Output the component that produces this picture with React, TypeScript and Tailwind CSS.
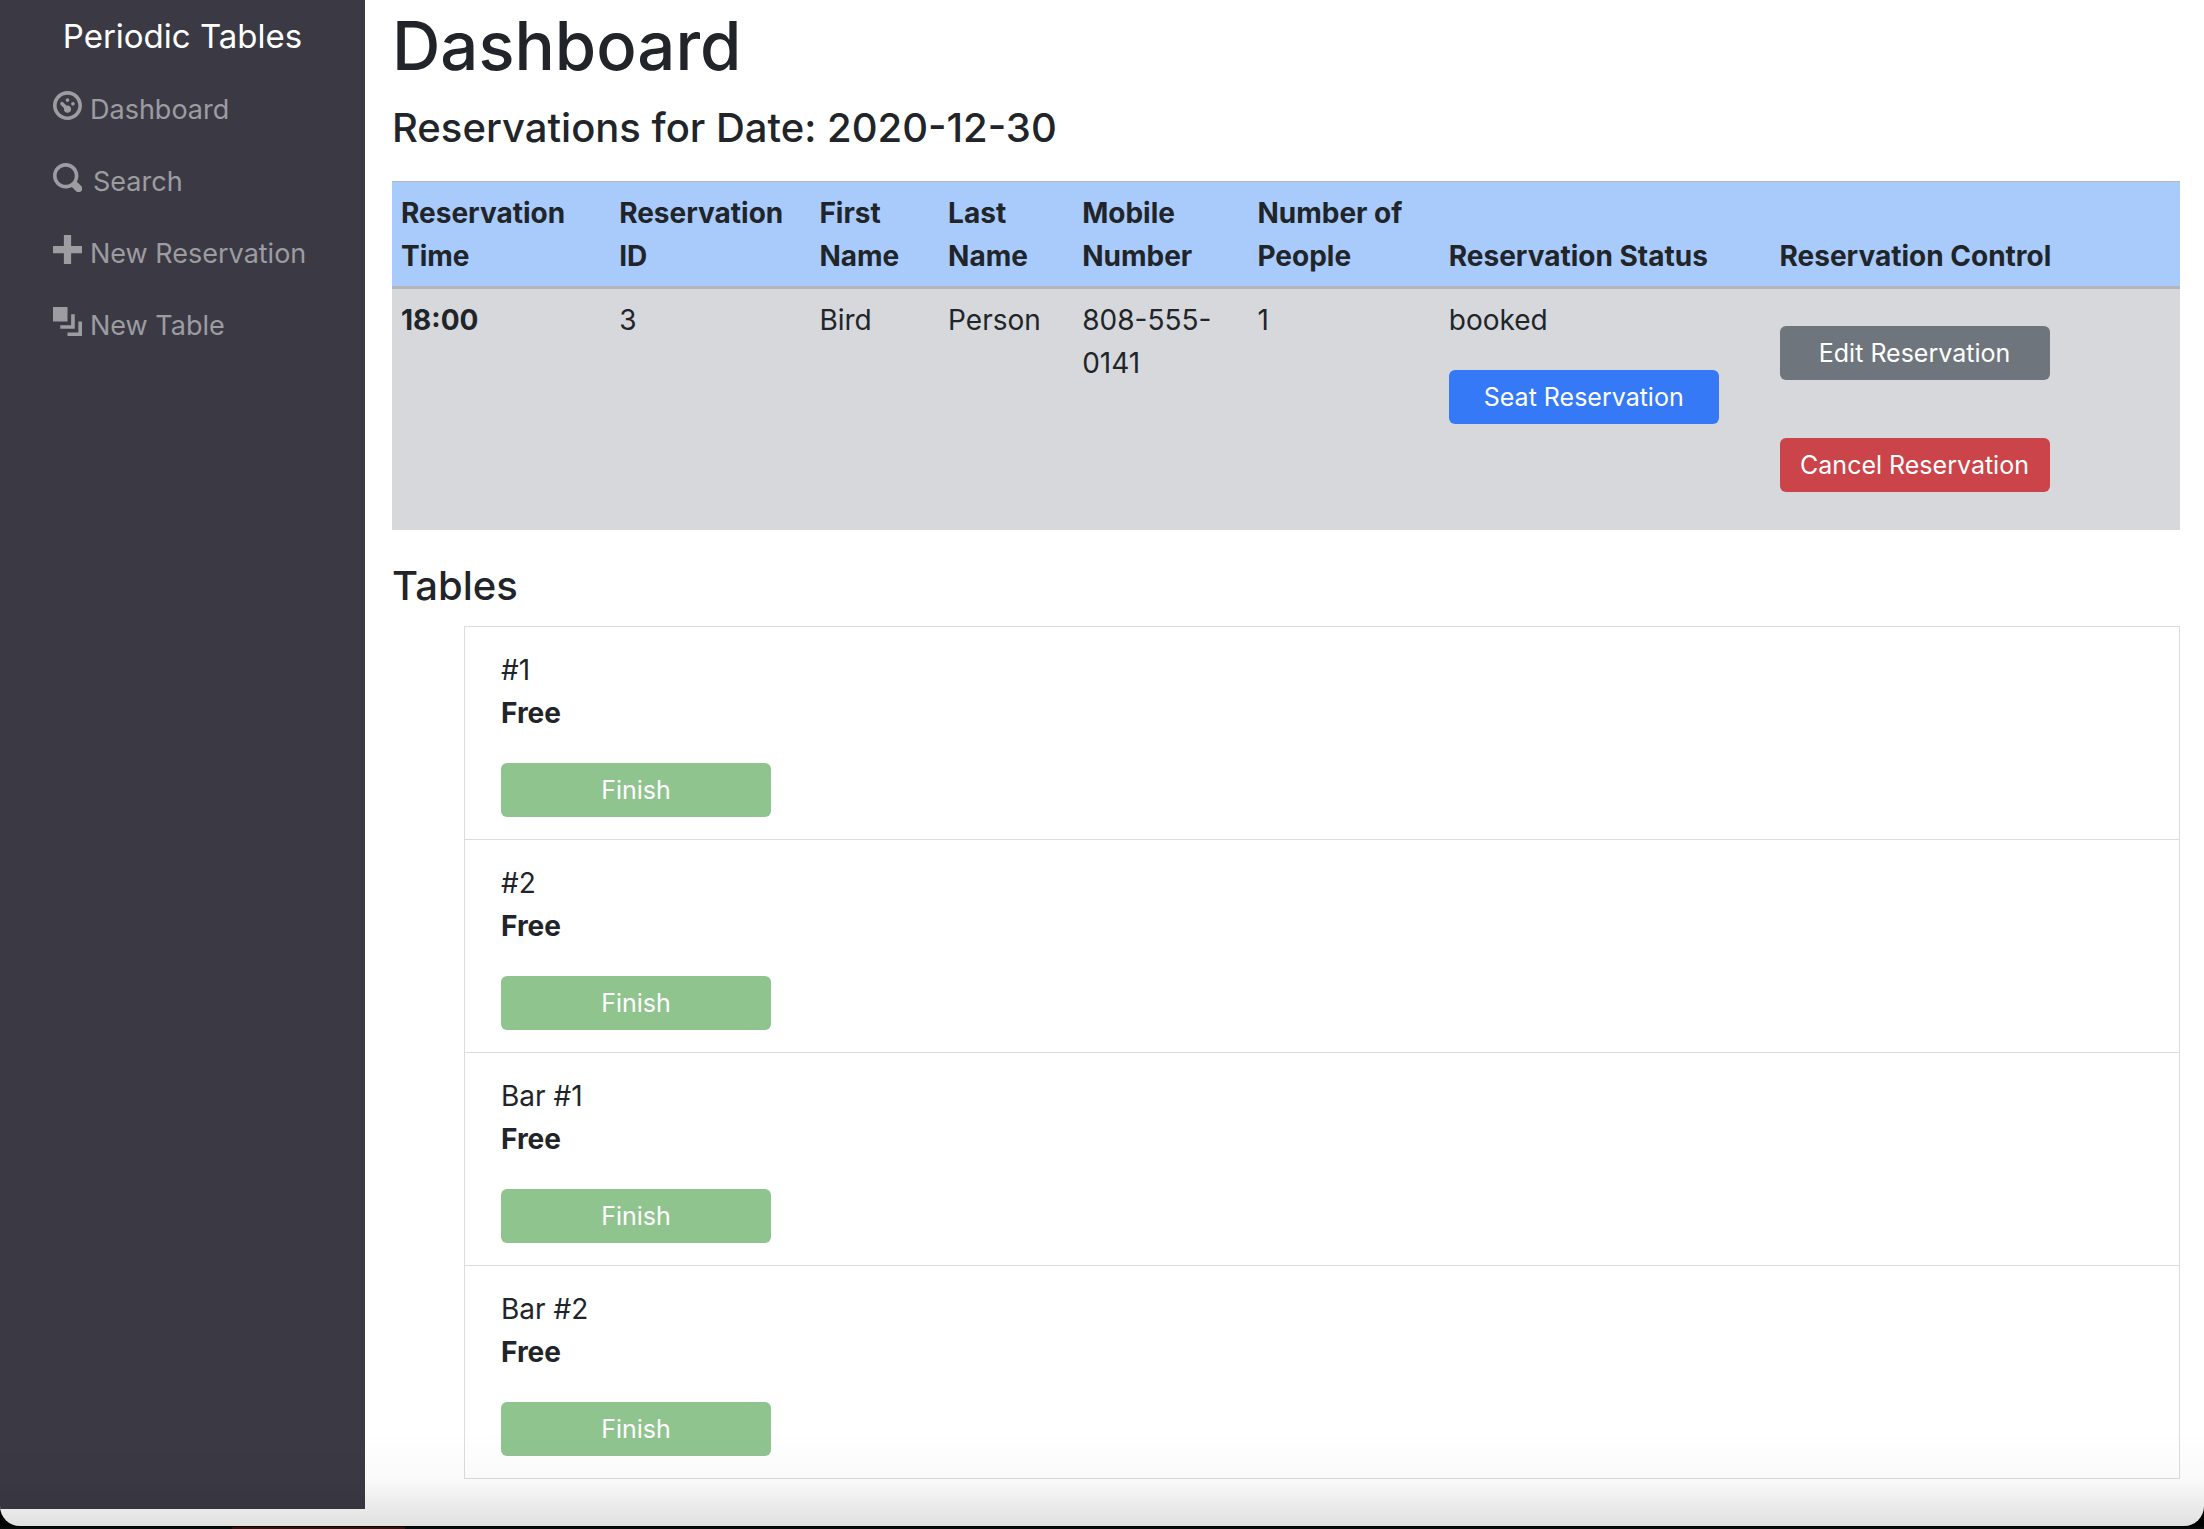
import type { ReactNode } from "react";

const icons = {
  dashboard:
    "M4 0c-2.2 0-4 1.800-4 4s1.800 4 4 4 4-1.800 4-4-1.800-4-4-4zm0 1c1.660 0 3 1.340 3 3s-1.340 3-3 3-3-1.340-3-3 1.340-3 3-3zm0 1c-.28 0-.5.22-.5.5s.22.5.5.5.5-.22.5-.5-.22-.5-.5-.5zm-1.660 1a.5.5 0 0 0-.19.84l.91.91c-.02.08-.06.16-.06.25 0 .55.45 1 1 1s1-.45 1-1-.45-1-1-1c-.09 0-.17.04-.25.06l-.91-.91a.5.5 0 0 0-.44-.16.5.5 0 0 0-.06 0zm3.160 0c-.28 0-.5.22-.5.5s.22.5.5.5.5-.22.5-.5-.22-.5-.5-.5z",
  search:
    "M3.500 0c-1.930 0-3.500 1.570-3.500 3.500s1.570 3.500 3.500 3.500c.59 0 1.170-.14 1.660-.41a1 1 0 0 0 .13.13l1 1a1.020 1.020 0 1 0 1.440-1.440l-1-1a1 1 0 0 0-.16-.13c.27-.49.44-1.060.44-1.660 0-1.930-1.550-3.500-3.500-3.500zm0 1c1.390 0 2.500 1.110 2.500 2.500 0 .66-.24 1.270-.66 1.720-.01.01-.02.02-.03.03a1 1 0 0 0-.13.13c-.44.4-1.040.63-1.690.63-1.390 0-2.500-1.110-2.500-2.500s1.110-2.500 2.500-2.500z",
  plus: "M3 0v3h-3v2h3v3h2v-3h3v-2h-3v-3h-2z",
  layers: "M0 0v4h4v-4h-4zm5 2v3h-3v1h4v-4h-1zm2 2v3h-3v1h4v-4h-1z",
};

function NavItem({ icon, wide, children }: { icon: keyof typeof icons; wide?: boolean; children: ReactNode }) {
  return (
    <li>
      <a href="#" className={`flex h-[43px] items-center text-[27px] text-[#9c9ca1] ${wide ? "gap-[11px]" : "gap-2"}`}>
        <svg viewBox="0 0 8 8" className="mb-2 h-[29px] w-[29px] shrink-0" fill="currentColor" aria-hidden="true">
          <path d={icons[icon]} />
        </svg>
        {children}
      </a>
    </li>
  );
}

function Button({ color, disabled, children }: { color: string; disabled?: boolean; children: ReactNode }) {
  return (
    <button
      type="button"
      disabled={disabled}
      className={`block h-[54px] w-[270px] rounded-md text-[25px] leading-[38px] text-white ${color}`}
    >
      {children}
    </button>
  );
}

const columns = [
  { label: "Reservation Time", width: "w-[12.2%]" },
  { label: "Reservation ID", width: "w-[11.2%]" },
  { label: "First Name", width: "w-[7.2%]" },
  { label: "Last Name", width: "w-[7.5%]" },
  { label: "Mobile Number", width: "w-[9.8%]" },
  { label: "Number of People", width: "w-[10.7%]" },
  { label: "Reservation Status", width: "w-[18.5%]" },
  { label: "Reservation Control", width: "w-[22.9%]" },
];

const tables = ["#1", "#2", "Bar #1", "Bar #2"];

export default function App() {
  return (
    <div className="flex min-h-screen flex-col bg-black font-['Inter',sans-serif] text-[28px] leading-[43px] text-[#212529]">
      <div className="relative flex flex-1 overflow-hidden rounded-b-[20px] bg-white">
        <nav className="mb-[17px] w-[365px] shrink-0 bg-[#3b3a44]">
          <a href="#" className="mt-[15px] block text-center text-[33px] text-white">
            Periodic Tables
          </a>
          <ul className="mt-[30px] flex flex-col gap-[29px] pl-[53px]">
            <NavItem icon="dashboard">Dashboard</NavItem>
            <NavItem icon="search" wide>Search</NavItem>
            <NavItem icon="plus">New Reservation</NavItem>
            <NavItem icon="layers">New Table</NavItem>
          </ul>
        </nav>

        <main className="min-w-0 flex-1 pr-6 pl-[27px]">
          <h1 className="pt-[3px] text-[67px] leading-[86px] font-medium">Dashboard</h1>
          <h2 className="mt-[13px] text-[40px] leading-[52px] font-medium">Reservations for Date: 2020-12-30</h2>

          <table className="mt-[27px] w-full table-fixed border-collapse text-left">
            <thead>
              <tr className="border-t border-b-3 border-t-[#b3b7bd] border-b-[#b3b5ba] bg-[#a8cbfc]">
                {columns.map((c) => (
                  <th key={c.label} scope="col" className={`px-[9px] pt-[10px] pb-2 align-bottom font-bold ${c.width}`}>
                    {c.label}
                  </th>
                ))}
              </tr>
            </thead>
            <tbody>
              <tr className="bg-[#d6d8dc] align-top">
                <th scope="row" className="px-[9px] pt-[10px] pb-2 font-bold">18:00</th>
                <td className="px-[9px] pt-[10px] pb-2">3</td>
                <td className="px-[9px] pt-[10px] pb-2">Bird</td>
                <td className="px-[9px] pt-[10px] pb-2">Person</td>
                <td className="px-[9px] pt-[10px] pb-2">808-555-0141</td>
                <td className="px-[9px] pt-[10px] pb-2">1</td>
                <td className="px-[9px] pt-[10px] pb-2">
                  <p className="mb-7">booked</p>
                  <Button color="bg-[#3579f6]">Seat Reservation</Button>
                </td>
                <td className="px-[9px] pt-[10px] pb-2">
                  <div className="flex flex-col gap-[58px] pt-[27px] pb-[30px]">
                    <Button color="bg-[#6e757c]">Edit Reservation</Button>
                    <Button color="bg-[#ca444a]">Cancel Reservation</Button>
                  </div>
                </td>
              </tr>
            </tbody>
          </table>

          <h2 className="mt-[30px] text-[40px] leading-[52px] font-medium">Tables</h2>
          <ul className="mt-[14px] ml-[72px] border border-b-0 border-[#dcdcdd]">
            {tables.map((name) => (
              <li key={name} className="border-b border-[#dcdcdd] px-9 py-[22px]">
                <p>{name}</p>
                <p className="mb-7 font-bold">Free</p>
                <Button color="bg-[#90c48f]" disabled>Finish</Button>
              </li>
            ))}
          </ul>
        </main>

        <div className="pointer-events-none absolute inset-x-0 bottom-0 h-24 bg-linear-to-t from-black/12 via-black/2 to-transparent" />
      </div>
      <div className="flex h-[3px] border-t border-black bg-[#050c0c]">
        <div className="ml-[232px] w-[173px] bg-[#3a0f0c]" />
      </div>
    </div>
  );
}
